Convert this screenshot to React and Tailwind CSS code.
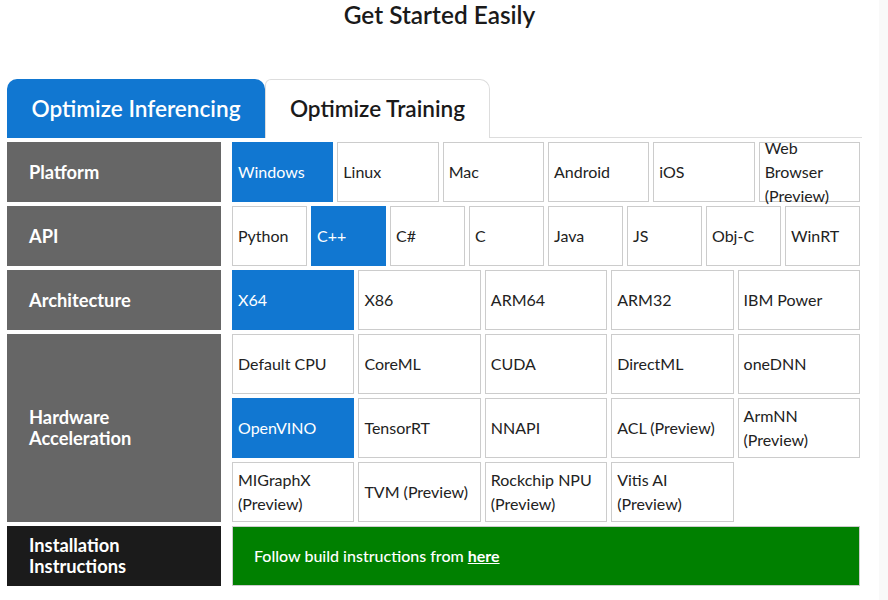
import React from "react";

const Cell = ({ label, active }) => (
  <div
    className={
      "h-[60px] flex items-center pl-[5px] pr-1 text-[16px] leading-[24px] border overflow-visible " +
      (active
        ? "bg-[#1177d1] border-[#1177d1] text-white"
        : "bg-white border-[#cccccc] text-[#222222]")
    }
  >
    <span>{label}</span>
  </div>
);

const Label = ({ children, dark, tall }) => (
  <div
    className={
      "w-[214px] shrink-0 flex items-center pl-[22px] text-white font-bold text-[18.3px] leading-[21px] " +
      (dark ? "bg-[#1b1b1b] " : "bg-[#666666] ") +
      (tall ? "h-[188px]" : "h-[60px]")
    }
  >
    {children}
  </div>
);

export default function App() {
  const platforms = ["Windows", "Linux", "Mac", "Android", "iOS", "Web Browser (Preview)"];
  const apis = ["Python", "C++", "C#", "C", "Java", "JS", "Obj-C", "WinRT"];
  const archs = ["X64", "X86", "ARM64", "ARM32", "IBM Power"];
  const hw = [
    "Default CPU", "CoreML", "CUDA", "DirectML", "oneDNN",
    "OpenVINO", "TensorRT", "NNAPI", "ACL (Preview)", "ArmNN (Preview)",
    "MIGraphX (Preview)", "TVM (Preview)", "Rockchip NPU (Preview)", "Vitis AI (Preview)",
  ];
  return (
    <div className="flex w-[888px] h-[600px] bg-white overflow-hidden" style={{ fontFamily: "Lato, 'Open Sans', sans-serif" }}>
      <div className="w-[879px] shrink-0">
        <h1 className="text-center text-[24.4px] leading-[30px] font-semibold text-[#1a1a1a] pt-0 h-[79px]">
          Get Started Easily
        </h1>
        <div className="pl-[7px] w-[862px]">
          <div className="flex border-b border-[#dddddd] h-[59px]">
            <div className="w-[258px] h-[59px] bg-[#1177d1] rounded-tl-[10px] rounded-tr-[10px] flex items-center justify-center text-white text-[22.6px] font-semibold">
              Optimize Inferencing
            </div>
            <div className="w-[225px] h-[59px] bg-white border border-b-0 border-[#dddddd] rounded-tr-[10px] rounded-tl-[6px] flex items-center justify-center text-[#1a1a1a] text-[22.6px] font-semibold">
              Optimize Training
            </div>
          </div>
          <div className="flex flex-col gap-1 mt-1">
            <div className="flex gap-[11px]">
              <Label>Platform</Label>
              <div className="w-[628px] grid grid-cols-6 gap-1">
                {platforms.map((p, i) => <Cell key={p} label={p} active={i === 0} />)}
              </div>
            </div>
            <div className="flex gap-[11px]">
              <Label>API</Label>
              <div className="w-[628px] grid grid-cols-8 gap-1">
                {apis.map((p, i) => <Cell key={p} label={p} active={i === 1} />)}
              </div>
            </div>
            <div className="flex gap-[11px]">
              <Label>Architecture</Label>
              <div className="w-[628px] grid grid-cols-5 gap-1">
                {archs.map((p, i) => <Cell key={p} label={p} active={i === 0} />)}
              </div>
            </div>
            <div className="flex gap-[11px]">
              <Label tall>
                <span>Hardware<br />Acceleration</span>
              </Label>
              <div className="w-[628px] grid grid-cols-5 gap-1">
                {hw.map((p, i) => <Cell key={p} label={p} active={i === 5} />)}
              </div>
            </div>
            <div className="flex gap-[11px]">
              <Label dark>
                <span>Installation<br />Instructions</span>
              </Label>
              <div className="w-[628px] h-[60px] bg-[#008000] border border-[#cccccc] flex items-center pl-[21px] text-white text-[16px] font-medium">
                <span>
                  Follow build instructions from <a className="font-bold underline">here</a>
                </span>
              </div>
            </div>
          </div>
        </div>
      </div>
      <div className="flex-1 bg-[#f9f9f9]" />
    </div>
  );
}
